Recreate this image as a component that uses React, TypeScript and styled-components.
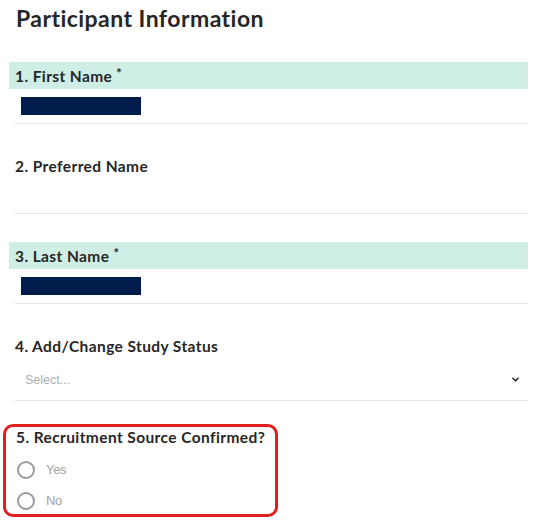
import React from "react";
import styled, { createGlobalStyle } from "styled-components";

const Global = createGlobalStyle`
  html, body { margin: 0; padding: 0; background: #ffffff; }
  body { font-family: "Lato", "Open Sans", sans-serif; color: #262626; }
  * { box-sizing: border-box; }
`;

const Page = styled.div`
  width: 534px;
  padding: 4px 6px 0 15px;
`;

const Title = styled.h1`
  margin: 0 0 30px 1px;
  font-family: "Lato", sans-serif;
  font-weight: 700;
  font-size: 23px;
  letter-spacing: 0.45px;
  line-height: 28px;
  color: #262626;
`;

const Field = styled.div<{ $gap?: number }>`
  margin-bottom: ${(p) => p.$gap ?? 28}px;
`;

const LabelBand = styled.div<{ $highlight?: boolean }>`
  height: 27px;
  margin-left: -6px;
  padding-left: 6px;
  display: flex;
  align-items: center;
  background: ${(p) => (p.$highlight ? "#ceeee6" : "transparent")};
  font-family: "Lato", sans-serif;
  font-weight: 700;
  font-size: 15.5px;
  letter-spacing: 0.4px;
  color: #262626;
`;

const Req = styled.span`
  font-size: 13px;
  align-self: flex-start;
  margin-top: 3px;
  margin-left: 4px;
`;

const InputArea = styled.div<{ $tall?: boolean }>`
  height: ${(p) => (p.$tall ? "42px" : "35px")};
  border-bottom: 1px solid #e4e4e4;
  display: flex;
  align-items: center;
  justify-content: space-between;
  padding: 0 8px 0 ${(p) => (p.$tall ? "10px" : "6px")};
`;

const Redacted = styled.div`
  width: 120px;
  height: 18px;
  background: #011b4b;
`;

const Placeholder = styled.span`
  font-family: "Liberation Sans", Arial, sans-serif;
  font-size: 12.5px;
  color: #aab0b4;
`;

const Chevron = styled.svg`
  width: 9px;
  height: 7px;
`;

const Highlight = styled.div`
  margin-left: -12px;
  width: 275px;
  height: 93px;
  border: 3px solid #e0201e;
  border-radius: 10px;
  padding: 0 0 0 10px;
`;

const GroupLabel = styled.div`
  height: 20px;
  display: flex;
  align-items: center;
  font-family: "Lato", sans-serif;
  font-weight: 700;
  font-size: 15.5px;
  letter-spacing: 0.4px;
  color: #262626;
  margin-bottom: 7px;
`;

const RadioRow = styled.label`
  height: 31px;
  display: flex;
  align-items: center;
  gap: 11px;
  padding-left: 1px;
`;

const RadioCircle = styled.span`
  width: 18px;
  height: 18px;
  border-radius: 50%;
  border: 2px solid #9a9a9a;
  display: inline-block;
`;

const RadioText = styled.span`
  font-family: "Liberation Sans", Arial, sans-serif;
  font-size: 13px;
  color: #a3a3a3;
  letter-spacing: -0.3px;
`;

export default function App() {
  return (
    <>
      <Global />
      <Page>
        <Title>Participant Information</Title>

        <Field>
          <LabelBand $highlight>
            1. First Name<Req>*</Req>
          </LabelBand>
          <InputArea>
            <Redacted />
          </InputArea>
        </Field>

        <Field>
          <LabelBand>2. Preferred Name</LabelBand>
          <InputArea />
        </Field>

        <Field>
          <LabelBand $highlight>
            3. Last Name<Req>*</Req>
          </LabelBand>
          <InputArea>
            <Redacted />
          </InputArea>
        </Field>

        <Field $gap={23}>
          <LabelBand>4. Add/Change Study Status</LabelBand>
          <InputArea $tall>
            <Placeholder>Select...</Placeholder>
            <Chevron viewBox="0 0 10 8">
              <path d="M1.5 2 L5 5.5 L8.5 2" fill="none" stroke="#333" strokeWidth="2" />
            </Chevron>
          </InputArea>
        </Field>

        <Highlight>
          <GroupLabel>5. Recruitment Source Confirmed?</GroupLabel>
          <RadioRow>
            <RadioCircle />
            <RadioText>Yes</RadioText>
          </RadioRow>
          <RadioRow>
            <RadioCircle />
            <RadioText>No</RadioText>
          </RadioRow>
        </Highlight>
      </Page>
    </>
  );
}
